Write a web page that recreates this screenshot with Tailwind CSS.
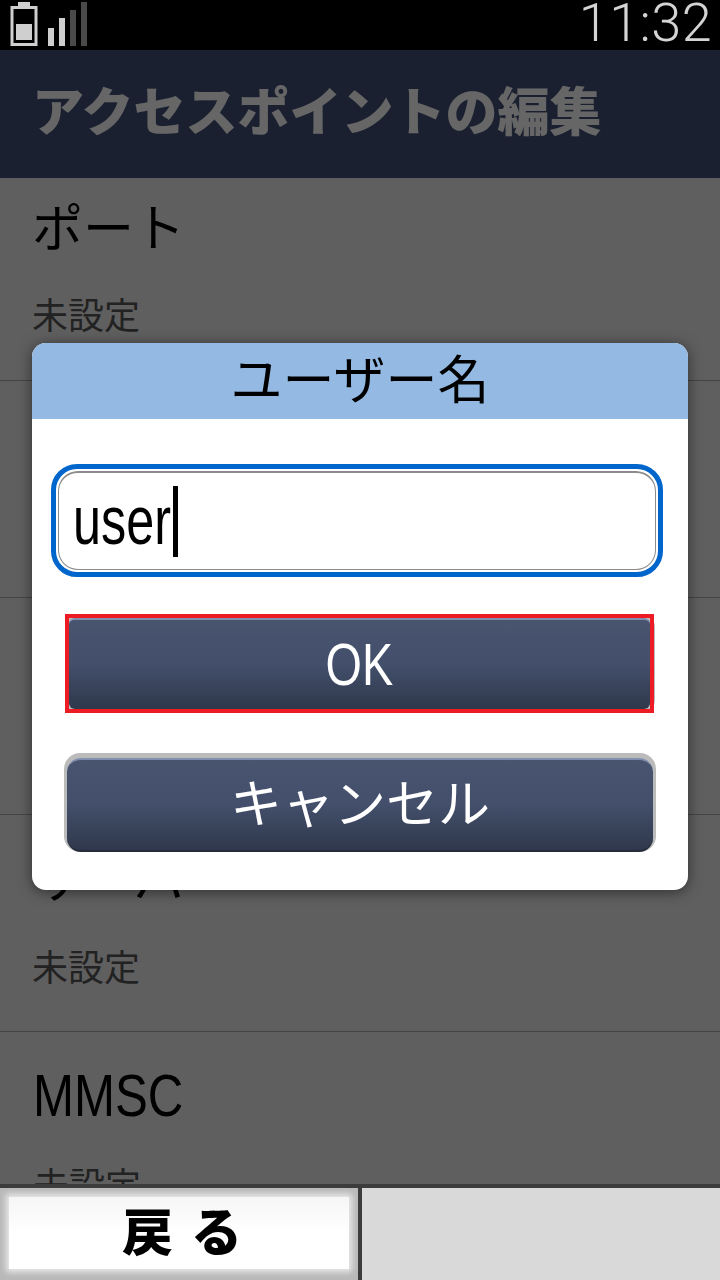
<!DOCTYPE html>
<html lang="ja">
<head>
  <meta charset="UTF-8">
  <title>アクセスポイントの編集</title>
  <script src="https://cdn.jsdelivr.net/npm/@tailwindcss/browser@4"></script>
</head>
<body class="bg-black">
  <div class="w-[720px] h-[1280px] flex flex-col overflow-hidden font-['Liberation_Sans','Noto_Sans_CJK_JP',sans-serif]">

    <!-- Status bar -->
    <div class="h-[50px] shrink-0 bg-black flex items-start justify-between pl-[10px] pr-[8px]">
      <svg width="80" height="50" viewBox="0 0 80 50">
        <rect x="8" y="2" width="12" height="5" fill="#cfcfcf"/>
        <rect x="2" y="7.5" width="24" height="37" fill="none" stroke="#cfcfcf" stroke-width="3"/>
        <rect x="6" y="24" width="16" height="16" fill="#cfcfcf"/>
        <rect x="38" y="28" width="6" height="18" fill="#cfcfcf"/>
        <rect x="49" y="18" width="6" height="28" fill="#cfcfcf"/>
        <rect x="60" y="10" width="6" height="36" fill="#4a4a4a"/>
        <rect x="71" y="2" width="6" height="44" fill="#4a4a4a"/>
      </svg>
      <span class="font-['Roboto'] font-light text-[54px] leading-[45px] text-[#d4d4d4] tracking-[0.4px]">11:32</span>
    </div>

    <div class="relative flex-1 overflow-hidden bg-[#eeeeee]">
      <!-- Title bar -->
      <div class="h-[128px] bg-[#415278] flex items-center pl-[32px] pb-[3px]">
        <h1 class="text-[52px] font-black text-white leading-none">アクセスポイントの編集</h1>
      </div>

      <!-- Settings list -->
      <div class="text-black">
        <div class="h-[203px] border-b border-[#aaaaaa] pl-[32px] pt-[24px]">
          <p class="text-[51px] leading-[56px]">ポート</p>
          <p class="mt-[37px] text-[36px] leading-[44px] text-[#555555]">未設定</p>
        </div>
        <div class="h-[217px] border-b border-[#aaaaaa] pl-[32px] pt-[38px]">
          <p class="text-[51px] leading-[56px]">ユーザー名</p>
          <p class="mt-[37px] text-[36px] leading-[44px] text-[#555555]">未設定</p>
        </div>
        <div class="h-[217px] border-b border-[#aaaaaa] pl-[32px] pt-[38px]">
          <p class="text-[51px] leading-[56px]">パスワード</p>
          <p class="mt-[37px] text-[36px] leading-[44px] text-[#555555]">未設定</p>
        </div>
        <div class="h-[217px] border-b border-[#aaaaaa] pl-[32px] pt-[38px]">
          <p class="text-[51px] leading-[56px]">サーバ</p>
          <p class="mt-[38px] text-[36px] leading-[44px] text-[#555555]">未設定</p>
        </div>
        <div class="h-[217px] pl-[33px] pt-[36px]">
          <p class="text-[60px] leading-[56px] origin-left scale-x-[0.82]">MMSC</p>
          <p class="mt-[41px] text-[36px] leading-[44px] text-[#555555]">未設定</p>
        </div>
      </div>

      <!-- Dim overlay -->
      <div class="absolute inset-0 bg-black/60"></div>

      <!-- Dialog -->
      <div class="absolute left-[32px] top-[293px] w-[656px] h-[547px] bg-white rounded-[14px] overflow-hidden shadow-[0_2px_14px_rgba(0,0,0,0.5)]">
        <div class="h-[76px] bg-[#94bae3] flex items-center justify-center text-[52px] leading-none text-black">ユーザー名</div>
        <div class="mt-[45px] ml-[19px] w-[612px] h-[113px] rounded-[26px] border-[5px] border-[#0066cc] p-[2px]">
          <div class="h-full rounded-[20px] border border-[#8c8c8c] border-t-2 pl-[14px] flex items-center">
            <span class="text-[68px] leading-none text-black origin-left scale-x-[0.74] inline-block w-[100px] pb-[2px]">user</span>
            <span class="w-[5px] h-[71px] bg-black"></span>
          </div>
        </div>
        <div class="mt-[37px] mx-[32px] h-[99px] relative">
          <div class="absolute inset-x-[1px] top-[1px] bottom-[1px] rounded-[12px] bg-[#bbbbbb]"></div>
          <div class="absolute left-[1px] right-[2px] top-0 bottom-0 border-[4px] border-[#ed1c24]"></div>
          <button class="absolute left-[5px] right-[6px] top-[4px] bottom-[4px] rounded-[6px] border-t-2 border-[#7f8dae] bg-gradient-to-b from-[#49556f] via-[#434f6b] to-[#2f384b] text-white text-[60px] leading-none flex items-center justify-center">
            <span class="scale-x-[0.78]">OK</span>
          </button>
        </div>
        <button class="block mt-[40px] mx-[32px] w-[592px] h-[99px] rounded-[16px] bg-[#bbbbbb] pt-[5px] px-[3px] pb-0">
          <span class="flex items-center justify-center h-full rounded-[14px] border-t-2 border-b-2 border-t-[#7f8dae] border-b-[#262c3a] bg-gradient-to-b from-[#49556f] via-[#434f6b] to-[#2f384b] text-white text-[52px] leading-none">キャンセル</span>
        </button>
      </div>
    </div>

    <!-- Footer -->
    <div class="h-[96px] shrink-0 border-t-4 border-[#3c3c3c] flex">
      <div class="w-[358px] bg-[#b9b9b9] pl-[9px] pt-[9px]">
        <button class="w-[340px] h-[72px] pl-[8px] bg-gradient-to-b from-[#f6f6f6] via-white to-white shadow-[0_0_6px_3px_rgba(255,255,255,0.7)] text-black text-[51px] font-black leading-none tracking-[2px]">戻 る</button>
      </div>
      <div class="w-[4px] bg-[#3c3c3c]"></div>
      <div class="flex-1 bg-[#d9d9d9]"></div>
    </div>
  </div>
</body>
</html>
